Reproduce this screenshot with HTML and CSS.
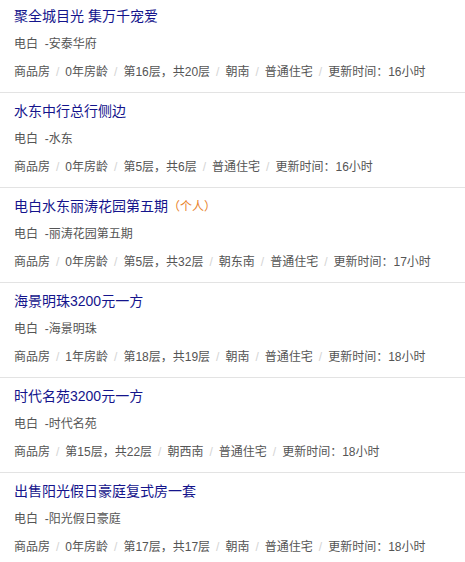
FILE: index.html
```html
<!DOCTYPE html>
<html lang="zh-CN">
<head>
    <meta charset="UTF-8">
    <meta name="viewport" content="width=device-width, initial-scale=1.0">
    <title>二手房源</title>
    <link rel="stylesheet" href="styles.css">
</head>
<body>
    <ul class="house-list">
        <li class="house">
            <a class="house-title" href="#">聚全城目光 集万千宠爱</a>
            <p class="house-area">电白&nbsp;&nbsp;-安泰华府</p>
            <p class="house-meta">
                <span>商品房</span><i>/</i><span>0年房龄</span><i>/</i><span>第16层，共20层</span><i>/</i><span>朝南</span><i>/</i><span>普通住宅</span><i>/</i><span>更新时间：16小时</span>
            </p>
        </li>
        <li class="house">
            <a class="house-title" href="#">水东中行总行侧边</a>
            <p class="house-area">电白&nbsp;&nbsp;-水东</p>
            <p class="house-meta">
                <span>商品房</span><i>/</i><span>0年房龄</span><i>/</i><span>第5层，共6层</span><i>/</i><span>普通住宅</span><i>/</i><span>更新时间：16小时</span>
            </p>
        </li>
        <li class="house">
            <a class="house-title" href="#">电白水东丽涛花园第五期<em class="tag">（个人）</em></a>
            <p class="house-area">电白&nbsp;&nbsp;-丽涛花园第五期</p>
            <p class="house-meta">
                <span>商品房</span><i>/</i><span>0年房龄</span><i>/</i><span>第5层，共32层</span><i>/</i><span>朝东南</span><i>/</i><span>普通住宅</span><i>/</i><span>更新时间：17小时</span>
            </p>
        </li>
        <li class="house">
            <a class="house-title" href="#">海景明珠3200元一方</a>
            <p class="house-area">电白&nbsp;&nbsp;-海景明珠</p>
            <p class="house-meta">
                <span>商品房</span><i>/</i><span>1年房龄</span><i>/</i><span>第18层，共19层</span><i>/</i><span>朝南</span><i>/</i><span>普通住宅</span><i>/</i><span>更新时间：18小时</span>
            </p>
        </li>
        <li class="house">
            <a class="house-title" href="#">时代名苑3200元一方</a>
            <p class="house-area">电白&nbsp;&nbsp;-时代名苑</p>
            <p class="house-meta">
                <span>商品房</span><i>/</i><span>第15层，共22层</span><i>/</i><span>朝西南</span><i>/</i><span>普通住宅</span><i>/</i><span>更新时间：18小时</span>
            </p>
        </li>
        <li class="house">
            <a class="house-title" href="#">出售阳光假日豪庭复式房一套</a>
            <p class="house-area">电白&nbsp;&nbsp;-阳光假日豪庭</p>
            <p class="house-meta">
                <span>商品房</span><i>/</i><span>0年房龄</span><i>/</i><span>第17层，共17层</span><i>/</i><span>朝南</span><i>/</i><span>普通住宅</span><i>/</i><span>更新时间：18小时</span>
            </p>
        </li>
    </ul>
</body>
</html>
```

FILE: styles.css
```css
/* house listing */
body {
    margin: 0;
    background: #fff;
    font-family: "Liberation Sans", "Noto Sans CJK SC", sans-serif;
    color: #555;
    overflow: hidden;
}
.house-list {
    list-style: none;
    margin: -2px 0 0;
    padding: 0;
}
.house {
    padding: 4px 14px 6px;
    border-bottom: 1px solid #e3e3e3;
}
.house-title {
    display: block;
    height: 28px;
    line-height: 28px;
    font-size: 14px;
    color: #14148c;
    text-decoration: none;
    white-space: nowrap;
}
.tag {
    font-style: normal;
    font-size: 12px;
    color: #e8822a;
}
.house-area, .house-meta {
    margin: 0;
    height: 28px;
    line-height: 28px;
    font-size: 12px;
    color: #555;
    white-space: nowrap;
}
.house-meta i {
    font-style: normal;
    color: #d4d4d4;
    margin: 0 6px;
}
```
